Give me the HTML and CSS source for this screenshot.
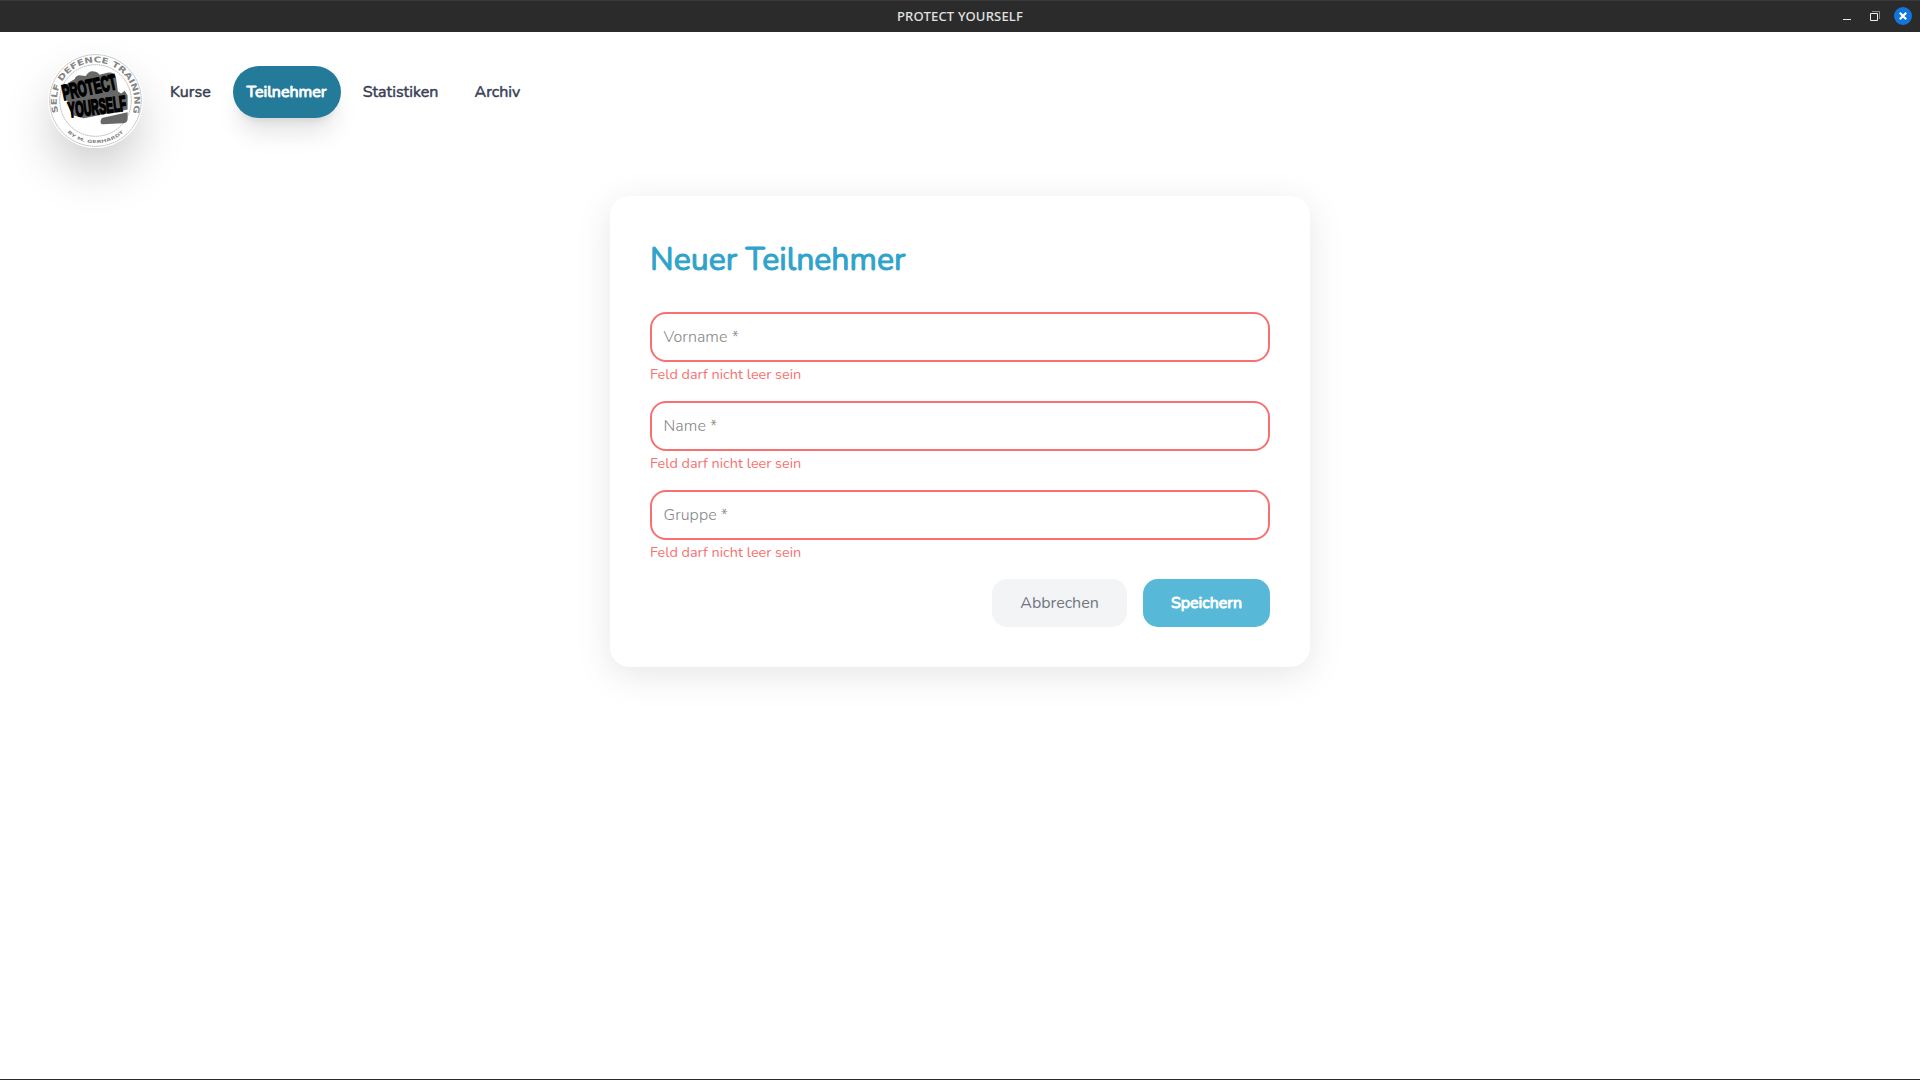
FILE: index.html
```html
<!DOCTYPE html>
<html lang="de">
<head>
<meta charset="utf-8">
<title>PROTECT YOURSELF</title>
<link rel="stylesheet" href="styles.css">
</head>
<body>
<div class="window">
  <div class="titlebar">
    <span class="titlebar-text">PROTECT YOURSELF</span>
    <div class="controls">
      <svg width="8" height="12" viewBox="0 0 8 12"><path d="M0 9.5h8" stroke="#e6e6e6"/></svg>
      <svg width="10" height="12" viewBox="0 0 10 12" fill="none"><path d="M2 1.5h7.5V9" stroke="#8a8a8a"/><path d="M.5 3.500h7v7h-7z" stroke="#f0f0f0"/></svg>
      <svg width="18" height="18" viewBox="0 0 18 18"><circle cx="9" cy="9" r="9" fill="#1175dd"/><path d="M5.800 5.800l6.400 6.400m0-6.400l-6.400 6.400" stroke="#fff" stroke-width="2.200"/></svg>
    </div>
  </div>
  <header class="header">
    <svg class="logo" viewBox="53 71 284 284">
      <defs>
        <path id="arc-top" d="M84 249A116 116 0 1 1 306 249"/>
        <path id="arc-bottom" d="M101 299A127 127 0 0 0 289 299"/>
      </defs>
      <circle cx="195" cy="213" r="142" fill="#fff"/>
      <circle cx="195" cy="213" r="137" class="ring"/>
      <circle cx="195" cy="213" r="107" class="ring"/>
      <text class="logo-top"><textPath href="#arc-top" textLength="434" lengthAdjust="spacingAndGlyphs">SELF DEFENCE TRAINING</textPath></text>
      <text class="logo-bottom"><textPath href="#arc-bottom" startOffset="14" textLength="184" lengthAdjust="spacingAndGlyphs">BY M. GERHARDT</textPath></text>
      <path fill="#686868" d="M98 174Q112 160 133 149Q137 136 152 138L166 140Q174 124 190 126Q202 127 207 136L230 130Q250 126 256 143L262 186L272 192L282 184L291 198V240L240 250L160 266L124 256Z"/>
      <path fill="#686868" d="M214 265L291 248V268Q290 281 276 281L218 284Q209 284 210 274Z"/>
      <g class="logo-word">
        <text transform="rotate(-12 100 212)" x="100" y="212" textLength="164" lengthAdjust="spacingAndGlyphs">PROTECT</text>
        <text transform="rotate(-7 116 264)" x="116" y="264" textLength="174" lengthAdjust="spacingAndGlyphs">YOURSELF</text>
      </g>
    </svg>
    <nav class="nav">
      <a class="nav-item kurse">Kurse</a>
      <a class="nav-item active">Teilnehmer</a>
      <a class="nav-item statistiken">Statistiken</a>
      <a class="nav-item archiv">Archiv</a>
    </nav>
  </header>
  <main class="main">
    <form class="card">
      <h1 class="title">Neuer Teilnehmer</h1>
      <div class="field">
        <div class="input">Vorname *</div>
        <div class="error">Feld darf nicht leer sein</div>
      </div>
      <div class="field">
        <div class="input">Name *</div>
        <div class="error">Feld darf nicht leer sein</div>
      </div>
      <div class="field">
        <div class="input">Gruppe *</div>
        <div class="error">Feld darf nicht leer sein</div>
      </div>
      <div class="actions">
        <button type="button" class="button cancel">Abbrechen</button>
        <button type="button" class="button save">Speichern</button>
      </div>
    </form>
  </main>
</div>
</body>
</html>
```
FILE: styles.css
```css
* { box-sizing: border-box; }
body { margin: 0; font-family: Nunito, Lato, sans-serif; font-size: 16px; line-height: 24px; color: #374151; }
.window { height: 1080px; display: flex; flex-direction: column; background: #fff; border-bottom: 1px solid #2b2b2b; overflow: hidden; }
.titlebar { height: 32px; flex: none; display: grid; grid-template-columns: 1fr auto 1fr; align-items: center; background: #2b2b2b; border-top: 1px solid #3a3a3a; }
.titlebar-text { grid-column: 2; margin-top: -2px; font: 500 13px/20px "Noto Sans", sans-serif; letter-spacing: 0.200px; color: #e2e2e2; }
.controls { display: flex; align-items: center; justify-content: flex-end; padding-right: 8px; margin-top: -2px; }
.controls svg + svg { margin-left: 19px; }
.controls svg + svg + svg { margin-left: 14px; }

.header { height: 164px; flex: none; display: flex; align-items: flex-start; padding: 21px 48px 0; }
.logo { width: 95px; height: 95px; border-radius: 50%; box-shadow: 0 25px 50px -5px rgba(0, 0, 0, .22); }
.ring { fill: none; stroke: #777; stroke-width: 1.500; stroke-dasharray: 5 1.500; }
.logo-top { font: bold 24px "DejaVu Sans", sans-serif; fill: #858585; }
.logo-bottom { font: bold 12.500px "DejaVu Sans", sans-serif; fill: #858585; }
.logo-word { font: bold 64px "Liberation Sans", sans-serif; fill: #000; stroke: #000; stroke-width: 5; }
.nav { display: flex; margin: 13px 0 0 14px; gap: 9px; }
.nav-item { height: 52px; padding: 14px 13px; border-radius: 26px; font-weight: 400; -webkit-text-stroke: 0.5px currentColor; color: #3a4056; white-space: nowrap; }
.kurse { width: 67px; }
.active { width: 108px; padding-left: 13.500px; background: #237a99; color: #fff; -webkit-text-stroke-width: 0.9px; box-shadow: 0 20px 25px -5px rgba(0, 0, 0, .1), 0 8px 10px -6px rgba(0, 0, 0, .1); }
.statistiken { width: 103px; padding-left: 12.700px; }
.archiv { padding-left: 12.500px; }

.main { display: flex; justify-content: center; }
.card { width: 700px; height: 471px; padding: 40px; border-radius: 20px; background: #fff; box-shadow: 0 8px 36px rgba(0, 0, 0, .1); }
.title { margin: 0 0 28px; height: 48px; font-size: 32px; line-height: 48px; font-weight: 400; -webkit-text-stroke: 1px currentColor; color: #2fa3cb; white-space: nowrap; }
.field { height: 89px; }
.input { height: 50px; padding: 11px 11.500px; border: 2px solid #f87171; border-radius: 16px; color: #858585; font-weight: 300; letter-spacing: 0.080px; }
.error { font-size: 14.400px; line-height: 25px; color: #f87171; }
.actions { display: flex; justify-content: flex-end; gap: 16px; }
.button { height: 48px; padding: 0; border: 0; border-radius: 15px; font: inherit; }
.cancel { width: 135px; background: #f2f4f6; color: #70757f; }
.save { width: 127px; background: #57b8d7; color: #fff; -webkit-text-stroke: 0.9px currentColor; }
```
